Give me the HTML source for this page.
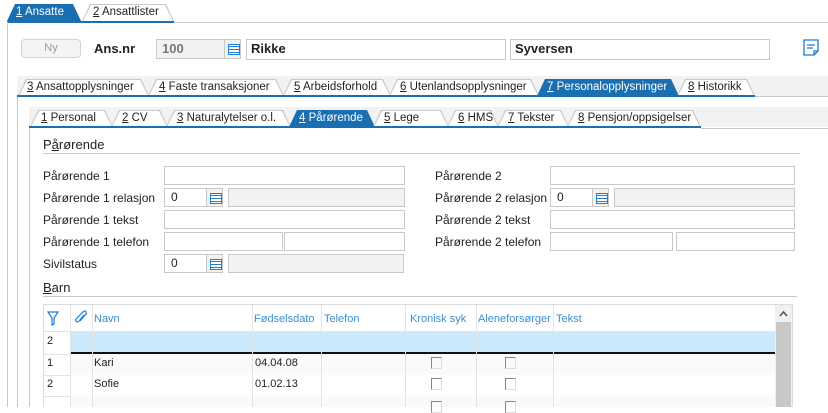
<!DOCTYPE html><html><head><meta charset="utf-8"><style>
*{margin:0;padding:0;box-sizing:border-box}
body{width:828px;height:407px;overflow:hidden;background:#fff;font-family:"Liberation Sans",sans-serif;font-size:12px;color:#222;position:relative}
.a{position:absolute}
.tab{position:absolute;z-index:2;height:17px;line-height:17px;font-size:11.5px;color:#222;padding-left:11px;white-space:nowrap}
.tab .bg{position:absolute;left:0;top:0;right:0;bottom:0;z-index:-1;clip-path:polygon(8px 0,calc(100% - 8px) 0,100% 100%,0 100%);background:#c8c8c8}
.tab .bg::before{content:"";position:absolute;left:1px;top:1px;right:1px;bottom:0;background:#fff;clip-path:polygon(8px 0,calc(100% - 8px) 0,100% 100%,0 100%)}
.tab.on{color:#fff}
.tab.on .bg,.tab.on .bg::before{background:#1a6fb0}
u{text-decoration:underline}
.in{position:absolute;height:19px;border:1px solid #c8c8c8;background:#fff;padding-left:6px;line-height:17px;font-size:12px}
.g{background:#f2f2f2}
.ic{position:absolute;width:17px;height:19px;border:1px solid #c8c8c8;background:#f2f2f2}
.ic::after{content:"";position:absolute;left:3px;top:4px;width:10px;height:9px;border:1px solid #1c7ed6;background:repeating-linear-gradient(#fff 0 1px,#1c7ed6 1px 2px,#fff 2px 3px)}
.lb{position:absolute;font-size:12px;color:#222}
.h{position:absolute;font-size:13px;color:#222}
.line{position:absolute;height:1px;background:#c8c8c8}
.gh{position:absolute;top:313px;font-size:11px;color:#3a8fd0}
.vd{position:absolute;width:1px;background:#e3e3e3;top:305px;height:102px}
.cb{position:absolute;width:11px;height:12px;border:1px solid #888;border-right-color:#ddd;border-bottom-color:#ddd}
.cell{position:absolute;font-size:11px;color:#222}
</style></head><body>
<div class="tab on" style="left:7px;top:4px;width:74px;padding-left:9px"><div class="bg"></div><u>1</u> Ansatte</div>
<div class="tab" style="left:82px;top:4px;width:92px"><div class="bg"></div><u>2</u> Ansattlister</div>
<div class="a" style="left:7px;top:21px;width:167px;height:2px;background:#1a6fb0"></div>
<div class="line" style="left:174px;top:22px;width:654px"></div>
<div class="a" style="left:7px;top:22px;width:1px;height:385px;background:#c8c8c8"></div>
<div class="a" style="left:21px;top:39px;width:60px;height:19px;border:1px solid #d4d4d4;border-radius:4px;background:#f4f4f4;color:#999;text-align:center;line-height:17px;font-size:11px">Ny</div>
<div class="a" style="left:94px;top:41px;font-weight:bold;font-size:13px">Ans.nr</div>
<div class="in g" style="left:156px;top:39px;width:70px;height:20px;font-weight:bold;color:#777;font-size:13px;padding-left:5px">100</div>
<div class="ic" style="left:224px;top:39px;height:20px"></div>
<div class="in" style="left:246px;top:39px;width:260px;height:21px;font-weight:bold;font-size:13px;padding-left:4px">Rikke</div>
<div class="in" style="left:510px;top:39px;width:260px;height:21px;font-weight:bold;font-size:13px;padding-left:4px">Syversen</div>
<svg class="a" style="left:803px;top:39px" width="16" height="18" viewBox="0 0 16 18"><path d="M1 1H15V12L11 16H1Z M15 12H11V16" fill="none" stroke="#1c7ed6" stroke-width="1.3"/><path d="M4 6H12M4 9H10" stroke="#1c7ed6" stroke-width="1.3"/></svg>
<div class="a" style="left:17px;top:76px;width:811px;height:20px;background:#f2f2f2"></div>
<div class="tab" style="left:18px;top:79px;width:131px;padding-left:9px"><div class="bg"></div><u>3</u> Ansattopplysninger</div>
<div class="tab" style="left:148px;top:79px;width:136px"><div class="bg"></div><u>4</u> Faste transaksjoner</div>
<div class="tab" style="left:283px;top:79px;width:108px"><div class="bg"></div><u>5</u> Arbeidsforhold</div>
<div class="tab" style="left:389px;top:79px;width:150px"><div class="bg"></div><u>6</u> Utenlandsopplysninger</div>
<div class="tab on" style="left:537px;top:79px;width:142px;padding-left:10px"><div class="bg"></div><u>7</u> Personalopplysninger</div>
<div class="tab" style="left:677px;top:79px;width:78px"><div class="bg"></div><u>8</u> Historikk</div>
<div class="a" style="left:17px;top:95px;width:738px;height:2px;background:#1a6fb0;z-index:3"></div>
<div class="line" style="left:755px;top:96px;width:73px"></div>
<div class="a" style="left:17px;top:96px;width:1px;height:311px;background:#c8c8c8"></div>
<div class="a" style="left:29px;top:107px;width:799px;height:20px;background:#f2f2f2"></div>
<div class="tab" style="left:30px;top:110px;width:83px;padding-left:11px"><div class="bg"></div><u>1</u> Personal</div>
<div class="tab" style="left:111px;top:110px;width:57px"><div class="bg"></div><u>2</u> CV</div>
<div class="tab" style="left:166px;top:110px;width:125px"><div class="bg"></div><u>3</u> Naturalytelser o.l.</div>
<div class="tab on" style="left:289px;top:110px;width:86px;padding-left:10px"><div class="bg"></div><u>4</u> Pårørende</div>
<div class="tab" style="left:373px;top:110px;width:76px"><div class="bg"></div><u>5</u> Lege</div>
<div class="tab" style="left:447px;top:110px;width:52px"><div class="bg"></div><u>6</u> HMS</div>
<div class="tab" style="left:497px;top:110px;width:72px"><div class="bg"></div><u>7</u> Tekster</div>
<div class="tab" style="left:567px;top:110px;width:134px"><div class="bg"></div><u>8</u> Pensjon/oppsigelser</div>
<div class="a" style="left:29px;top:126px;width:672px;height:2px;background:#1a6fb0;z-index:3"></div>
<div class="line" style="left:701px;top:128px;width:127px"></div>
<div class="a" style="left:29px;top:127px;width:1px;height:280px;background:#c8c8c8"></div>
<div class="h" style="left:43px;top:137px">P<u>å</u>rørende</div>
<div class="line" style="left:43px;top:153px;width:757px"></div>
<div class="lb" style="left:43px;top:169px">Pårørende 1</div>
<div class="in" style="left:164px;top:166px;width:241px"></div>
<div class="lb" style="left:43px;top:191px">Pårørende 1 relasjon</div>
<div class="in" style="left:164px;top:188px;width:44px">0</div>
<div class="ic" style="left:206px;top:188px"></div>
<div class="in g" style="left:228px;top:188px;width:177px"></div>
<div class="lb" style="left:43px;top:213px">Pårørende 1 tekst</div>
<div class="in" style="left:164px;top:210px;width:241px"></div>
<div class="lb" style="left:43px;top:235px">Pårørende 1 telefon</div>
<div class="in" style="left:164px;top:232px;width:119px"></div>
<div class="in" style="left:284px;top:232px;width:121px"></div>
<div class="lb" style="left:43px;top:257px">Sivilstatus</div>
<div class="in" style="left:164px;top:254px;width:44px">0</div>
<div class="ic" style="left:206px;top:254px"></div>
<div class="in g" style="left:228px;top:254px;width:176px"></div>
<div class="lb" style="left:435px;top:169px">Pårørende 2</div>
<div class="in" style="left:550px;top:166px;width:245px"></div>
<div class="lb" style="left:435px;top:191px">Pårørende 2 relasjon</div>
<div class="in" style="left:550px;top:188px;width:44px">0</div>
<div class="ic" style="left:592px;top:188px"></div>
<div class="in g" style="left:614px;top:188px;width:181px"></div>
<div class="lb" style="left:435px;top:213px">Pårørende 2 tekst</div>
<div class="in" style="left:550px;top:210px;width:245px"></div>
<div class="lb" style="left:435px;top:235px">Pårørende 2 telefon</div>
<div class="in" style="left:550px;top:232px;width:123px"></div>
<div class="in" style="left:676px;top:232px;width:119px"></div>
<div class="h" style="left:43px;top:280px"><u>B</u>arn</div>
<div class="line" style="left:43px;top:296px;width:754px"></div>
<div class="a" style="left:43px;top:304px;width:750px;height:103px;border:1px solid #dcdcdc;border-bottom:none"></div>
<div class="a" style="left:70px;top:331px;width:705px;height:22px;background:#cce8fb"></div>
<div class="a" style="left:70px;top:352px;width:705px;height:2px;background:#111"></div>
<div class="a" style="left:70px;top:354px;width:705px;height:21px;background:#fafafa"></div>
<div class="a" style="left:70px;top:396px;width:705px;height:11px;background:#fafafa"></div>
<div class="line" style="left:44px;top:331px;width:26px;background:#e3e3e3"></div>
<div class="line" style="left:44px;top:354px;width:26px;background:#e3e3e3"></div>
<div class="line" style="left:44px;top:375px;width:26px;background:#e3e3e3"></div>
<div class="line" style="left:44px;top:396px;width:26px;background:#e3e3e3"></div>
<div class="line" style="left:70px;top:331px;width:705px;background:#e3e3e3"></div>
<div class="vd" style="left:70px"></div><div class="vd" style="left:92px"></div><div class="vd" style="left:252px"></div><div class="vd" style="left:321px"></div><div class="vd" style="left:405px"></div><div class="vd" style="left:476px"></div><div class="vd" style="left:553px"></div>
<svg class="a" style="left:47px;top:311px" width="12" height="15" viewBox="0 0 12 15"><path d="M1 1H11L7 7V13L5 14V7Z" fill="none" stroke="#1c7ed6" stroke-width="1.2"/></svg>
<svg class="a" style="left:74px;top:310px" width="14" height="16" viewBox="0 0 14 16"><path d="M10 5L5 11Q3 13 2 11Q1 10 3 8L9 2Q11 0 12 2Q13 4 11 5L6 11" fill="none" stroke="#1c7ed6" stroke-width="1.2"/></svg>
<div class="gh" style="left:94px">Navn</div>
<div class="gh" style="left:254px">Fødselsdato</div>
<div class="gh" style="left:324px">Telefon</div>
<div class="gh" style="left:410px">Kronisk syk</div>
<div class="gh" style="left:478px">Aleneforsørger</div>
<div class="gh" style="left:556px">Tekst</div>
<div class="cell" style="left:47px;top:335px">2</div>
<div class="cell" style="left:47px;top:357px">1</div><div class="cell" style="left:94px;top:357px">Kari</div><div class="cell" style="left:255px;top:357px">04.04.08</div>
<div class="cell" style="left:47px;top:378px">2</div><div class="cell" style="left:94px;top:378px">Sofie</div><div class="cell" style="left:255px;top:378px">01.02.13</div>
<div class="cb" style="left:431px;top:357px"></div><div class="cb" style="left:505px;top:357px"></div>
<div class="cb" style="left:431px;top:378px"></div><div class="cb" style="left:505px;top:378px"></div>
<div class="cb" style="left:431px;top:401px"></div><div class="cb" style="left:505px;top:401px"></div>
<div class="a" style="left:775px;top:305px;width:17px;height:102px;background:#f0f0f0"></div>
<div class="a" style="left:776px;top:322px;width:15px;height:85px;background:#c8c8c8"></div>
<svg class="a" style="left:779px;top:310px" width="9" height="7" viewBox="0 0 9 7"><path d="M1 6L4.5 2L8 6" fill="none" stroke="#555" stroke-width="1.6"/></svg>
</body></html>
